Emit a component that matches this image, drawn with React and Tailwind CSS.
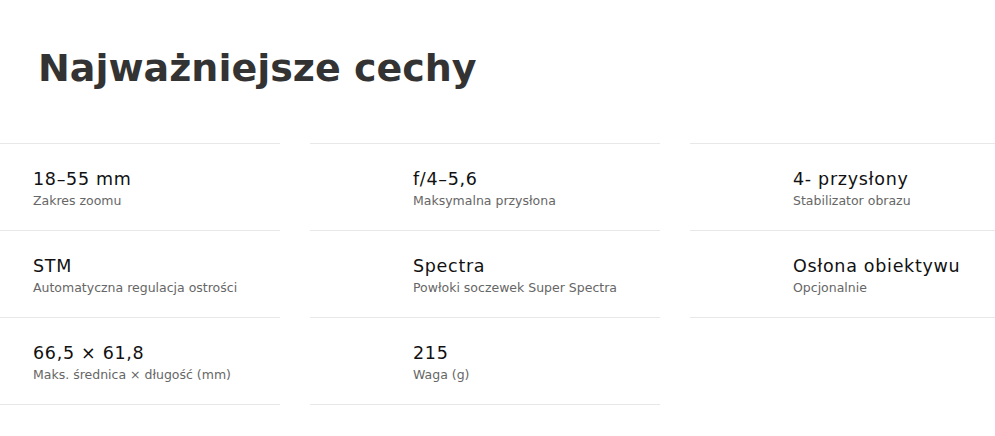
const specs = [
  { value: "18–55 mm", label: "Zakres zoomu" },
  { value: "f/4–5,6", label: "Maksymalna przysłona" },
  { value: "4- przysłony", label: "Stabilizator obrazu" },
  { value: "STM", label: "Automatyczna regulacja ostrości" },
  { value: "Spectra", label: "Powłoki soczewek Super Spectra" },
  { value: "Osłona obiektywu", label: "Opcjonalnie" },
  { value: "66,5 × 61,8", label: "Maks. średnica × długość (mm)" },
  { value: "215", label: "Waga (g)" },
]

export default function App() {
  return (
    <div className="w-[995px] h-[436px] overflow-hidden bg-white font-['DejaVu_Sans',sans-serif]">
      <h1 className="pt-[44px] pl-[38px] text-[38px] leading-[48px] font-bold text-[#333333]">
        Najważniejsze cechy
      </h1>

      <div className="mt-[51px] ml-[-70px] grid grid-cols-[350px_350px_350px] gap-x-[30px]">
        {specs.map((s, i) => (
          <div
            key={i}
            className={`h-[87px] pl-[103px] pt-[23px] border-b border-[#e8e8e8] ${i < 3 ? "border-t h-[88px]" : ""}`}
          >
            <p className="text-[17.5px] leading-[24px] tracking-[0.7px] text-[#111111]">{s.value}</p>
            <p className="text-[12.5px] leading-[20px] text-[#666666]">{s.label}</p>
          </div>
        ))}
      </div>
    </div>
  )
}
